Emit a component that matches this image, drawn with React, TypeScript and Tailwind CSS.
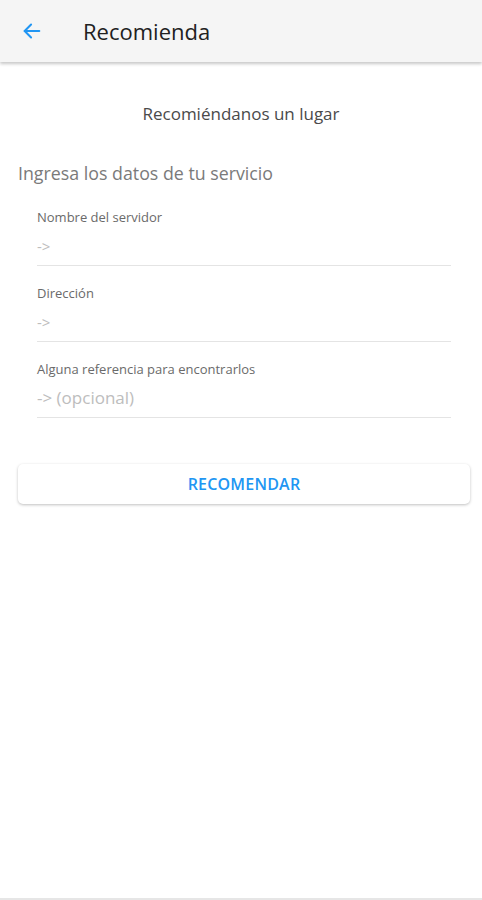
import React from 'react'

const fields = [
  { label: 'Nombre del servidor', placeholder: '->' },
  { label: 'Dirección', placeholder: '->' },
  { label: 'Alguna referencia para encontrarlos', placeholder: '-> (opcional)' },
]

export default function App() {
  return (
    <div
      className="relative flex h-[900px] w-[482px] flex-col bg-white"
      style={{ fontFamily: '"Open Sans", "Noto Sans", sans-serif' }}
    >
      {/* App bar */}
      <div className="flex h-[62px] items-center bg-[#f5f5f5] shadow-[0_2px_3px_rgba(0,0,0,0.22)]">
        <button className="ml-[20px] flex h-6 w-6 items-center justify-center text-[#2196f3]">
          <svg width="22" height="22" viewBox="0 0 24 24" fill="none" stroke="currentColor" strokeWidth="2.2" strokeLinecap="round" strokeLinejoin="round">
            <path d="M20 12H4" />
            <path d="M11 5l-7 7 7 7" />
          </svg>
        </button>
        <span className="ml-[39px] text-[22px] text-[#212121]">Recomienda</span>
      </div>

      <div className="pt-[40px] text-center text-[17px] leading-6 text-[#4a4a4a]">Recomiéndanos un lugar</div>

      <div className="mt-[35px] px-[18px] text-[17.8px] leading-6 text-[#7a7a7a]">Ingresa los datos de tu servicio</div>

      <div className="mt-[22px] flex flex-col gap-[17px] pl-[37px] pr-[31px]">
        {fields.map((f, i) => (
          <div key={i} className="border-b border-[#e4e4e4] pb-[5px]">
            <div className="text-[13px] leading-5 text-[#6a6a6a]">{f.label}</div>
            <div className={`${i === 2 ? 'text-[17px]' : 'text-[15px]'} mt-[5px] h-[28px] leading-[28px] text-[#bdbdbd]`}>
              {f.placeholder}
            </div>
          </div>
        ))}
      </div>

      <div className="mt-[46px] pl-[18px] pr-[12px]">
        <button className="flex h-[40px] w-full items-center justify-center rounded-[5px] bg-white text-[16px] font-semibold tracking-[0.2px] text-[#2196f3] shadow-[0_1px_3px_rgba(0,0,0,0.25)]">
          RECOMENDAR
        </button>
      </div>

      <div className="mt-auto h-[2px] bg-[#e6e6e6]" />
    </div>
  )
}
